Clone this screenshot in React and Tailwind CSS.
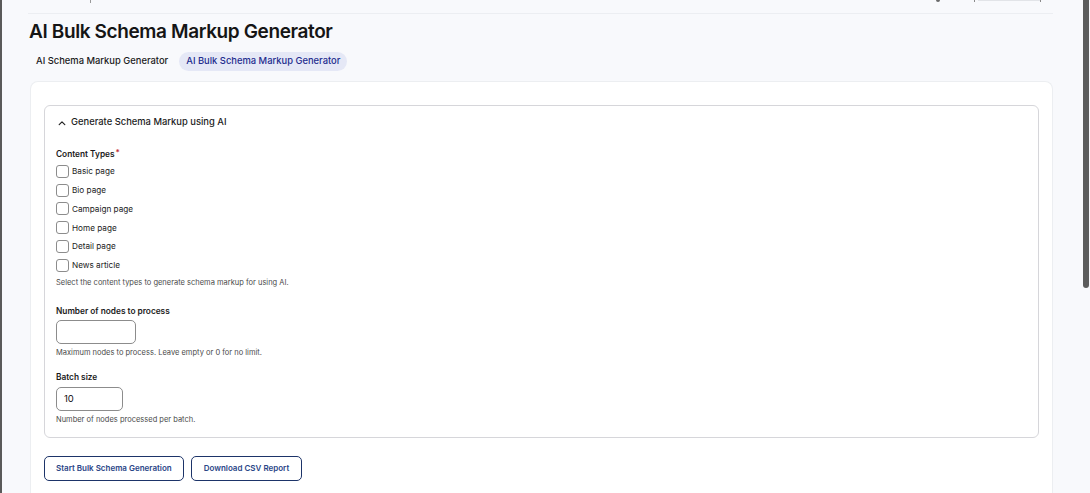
import React from "react";

function Checkbox({ label }) {
  return (
    <label className="flex items-center gap-[3px] h-[18.8px]">
      <span className="w-[13px] h-[13px] rounded-[3px] border border-[#8c8c8c] bg-white shrink-0" />
      <span className="text-[8.2px] text-[#222]">{label}</span>
    </label>
  );
}

export default function App() {
  const types = ["Basic page", "Bio page", "Campaign page", "Home page", "Detail page", "News article"];
  return (
    <div
      className="flex w-[1090px] h-[493px] overflow-hidden bg-[#f8f9fc]"
      style={{ fontFamily: "Inter, 'Noto Sans', sans-serif" }}
    >
      <div className="w-[2px] bg-[#5a5a5a] shrink-0" />
      <div className="flex-1 flex flex-col pl-[26px] pr-[30px]">
        {/* top strip */}
        <div className="relative h-[14px] border-b border-[#eceef2] shrink-0">
          <span className="absolute left-[62px] top-0 w-[1px] h-[3px] bg-[#9a9a9a]" />
          <span className="absolute left-[908px] top-0 w-[4px] h-[2px] bg-[#6a6a6a] rounded-b" />
          <span className="absolute left-[946px] top-0 w-[1px] h-[2px] bg-[#8a8a8a]" />
          <span className="absolute left-[950px] top-0 w-[62px] h-[1px] bg-[#e2e4e8]" />
          <span className="absolute left-[1012px] top-0 w-[1px] h-[2px] bg-[#8a8a8a]" />
        </div>
        <h1 className="mt-[6px] ml-[1px] text-[19px] leading-[24px] font-semibold tracking-[-0.02em] text-[#151515]">
          AI Bulk Schema Markup Generator
        </h1>
        <div className="flex items-center gap-[3px] mt-[8px]">
          <span className="px-[8px] h-[19px] flex items-center text-[9.4px] font-medium text-[#1a1a1a]">
            AI Schema Markup Generator
          </span>
          <span className="px-[7px] h-[19px] flex items-center rounded-full bg-[#e5e8f6] text-[9.4px] font-medium text-[#232c8e]">
            AI Bulk Schema Markup Generator
          </span>
        </div>
        <div className="mt-[10px] ml-[2px] flex-1 bg-white rounded-t-[8px] border border-b-0 border-[#eceef1] px-[13px] pt-[23px]">
          <div className="border border-[#d6d6da] rounded-[6px] pb-[11px]">
            <div className="flex items-center gap-[5px] pl-[13px] h-[33px]">
              <svg width="8" height="8" viewBox="0 0 10 10" fill="none">
                <path d="M1.5 7 L5 3.5 L8.5 7" stroke="#222" strokeWidth="1.5" strokeLinecap="round" strokeLinejoin="round" />
              </svg>
              <span className="text-[9.4px] font-medium text-[#1c1c1c]">Generate Schema Markup using AI</span>
            </div>
            <div className="pl-[11px] pt-[8px]">
              <div className="text-[8.3px] font-semibold text-[#1a1a1a] h-[14px] flex items-center">
                Content Types<span className="text-[#c0282f] ml-[1px] -mt-[5px] text-[8px]">*</span>
              </div>
              <div className="flex flex-col mt-[1px]">
                {types.map((t) => (
                  <Checkbox key={t} label={t} />
                ))}
              </div>
              <div className="text-[7.5px] text-[#4a4a4a] mt-[1px] h-[14px] flex items-center">
                Select the content types to generate schema markup for using AI.
              </div>

              <div className="text-[8.3px] font-semibold text-[#1a1a1a] mt-[14px] h-[14px] flex items-center">
                Number of nodes to process
              </div>
              <div className="mt-[2px] w-[80px] h-[24px] rounded-[5px] border border-[#8c8c8c] bg-white" />
              <div className="text-[7.5px] text-[#4a4a4a] mt-[3px] h-[12px] flex items-center">
                Maximum nodes to process. Leave empty or 0 for no limit.
              </div>

              <div className="text-[8.3px] font-semibold text-[#1a1a1a] mt-[11px] h-[14px] flex items-center">
                Batch size
              </div>
              <div className="mt-[3px] w-[67px] h-[24px] rounded-[5px] border border-[#8c8c8c] bg-white flex items-center pl-[7px] text-[9.5px] text-[#111]">
                10
              </div>
              <div className="text-[7.5px] text-[#4a4a4a] mt-[3px] h-[12px] flex items-center">
                Number of nodes processed per batch.
              </div>
            </div>
          </div>
          <div className="flex gap-[7px] mt-[18px]">
            <button className="h-[25px] px-[11px] rounded-[5px] border-[1.5px] border-[#1d3469] text-[8px] font-semibold text-[#2a4687] bg-white">
              Start Bulk Schema Generation
            </button>
            <button className="h-[25px] px-[12px] rounded-[5px] border-[1.5px] border-[#1d3469] text-[8px] font-semibold text-[#2a4687] bg-white">
              Download CSV Report
            </button>
          </div>
        </div>
      </div>
      <div className="w-[7px] shrink-0 flex flex-col">
        <div className="w-[6px] h-[288px] bg-[#5c5c5c] rounded-b-[3px]" />
      </div>
    </div>
  );
}
